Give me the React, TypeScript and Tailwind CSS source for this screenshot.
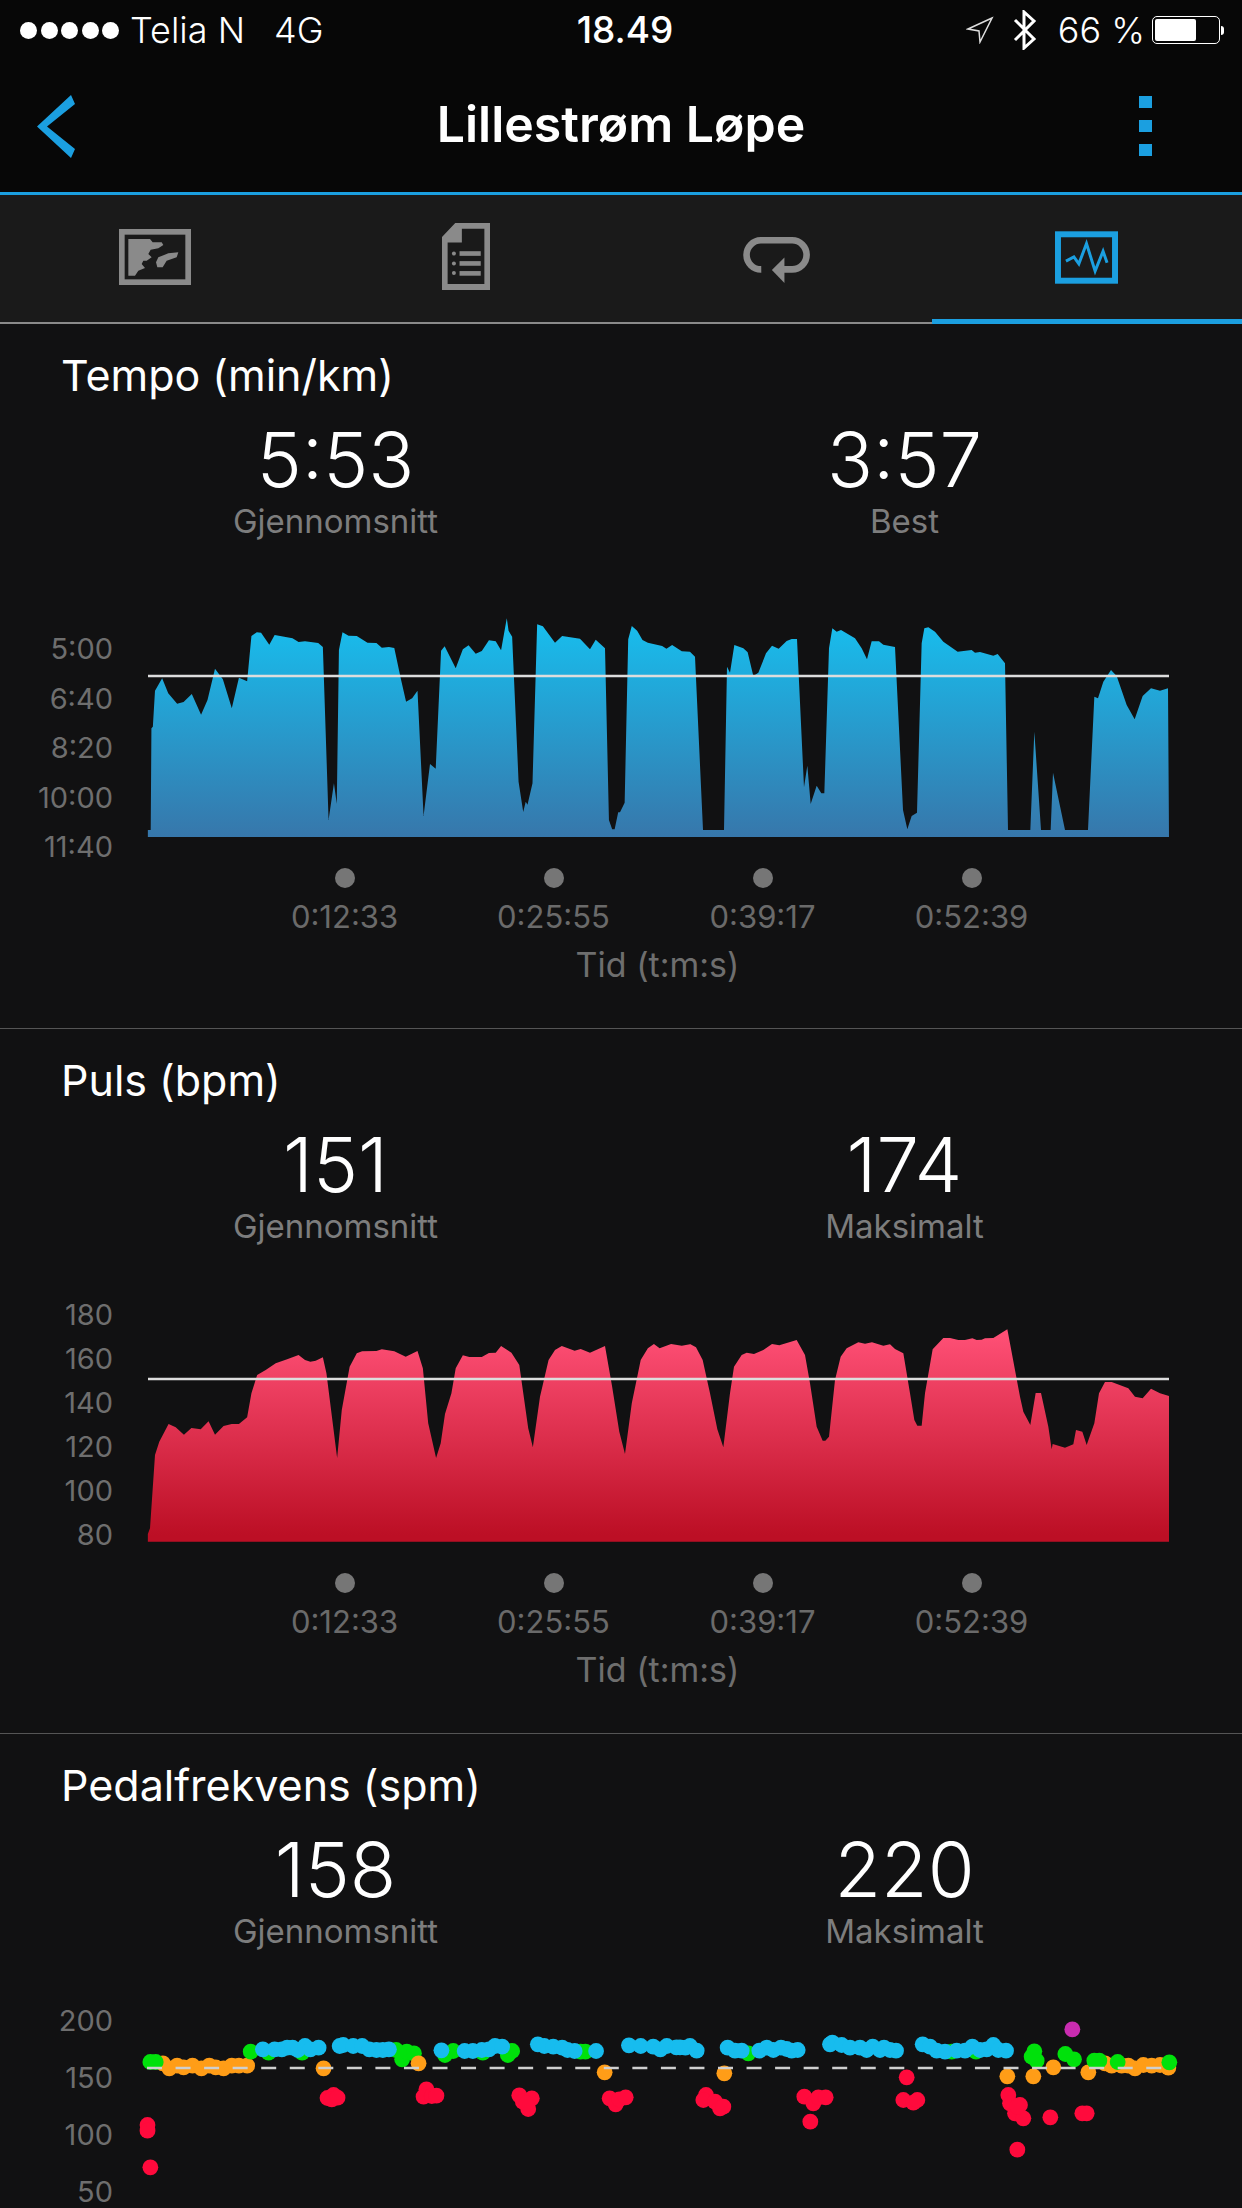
type Pt = [number, number];

const BLUE = '#1b9fe0';

// traced from the screenshot in crop units; left crops are 2.8x/3y, right crops 3x/3y
const mapL = (pts: Pt[], oy: number) => pts.map(([x, y]) => `${130 + x / 2.8},${oy + y / 3}`);
const mapR = (pts: Pt[], oy: number) => pts.map(([x, y]) => `${680 + x / 3},${oy + y / 3}`);

const tempoLeft: Pt[] = [[50,711],[50,690],[58,690],[60,385],[64,380],[70,272],[90,235],[107,280],[132,311],[150,306],[173,282],[199,344],[217,300],[238,206],[260,238],[285,325],[305,233],[328,244],[340,108],[355,97],[367,98],[390,134],[405,105],[455,115],[472,126],[490,124],[527,129],[540,141],[556,660],[571,550],[579,612],[585,150],[595,97],[612,107],[635,108],[665,128],[690,129],[705,143],[725,141],[740,144],[758,235],[773,305],[790,295],[805,272],[822,648],[840,492],[856,506],[871,152],[881,139],[912,205],[932,148],[948,136],[968,161],[985,153],[1005,121],[1024,124],[1039,151],[1055,55],[1060,92],[1070,110],[1088,545],[1101,636],[1108,605],[1113,614],[1127,550],[1140,73],[1156,79],[1190,128],[1210,108],[1260,116],[1288,148],[1304,119],[1330,145],[1341,660],[1350,688],[1357,688],[1367,637],[1372,637],[1385,608],[1395,118],[1405,78],[1420,92],[1435,120],[1450,128],[1490,138],[1502,146],[1518,135],[1545,154],[1568,155]];
const tempoRight: Pt[] = [[30,155],[45,170],[69,690],[132,690],[141,200],[150,218],[163,135],[190,145],[203,157],[220,228],[235,218],[258,160],[276,137],[296,146],[320,123],[335,117],[351,117],[372,562],[382,497],[392,612],[410,557],[424,580],[433,580],[447,145],[457,85],[470,95],[483,90],[525,115],[545,145],[561,178],[575,124],[597,124],[610,134],[645,141],[669,630],[682,688],[695,648],[711,638],[725,130],[733,85],[745,82],[765,95],[790,125],[833,155],[875,150],[885,158],[900,156],[940,167],[953,162],[975,190],[984,690],[1051,690],[1063,395],[1083,690],[1112,690],[1119,518],[1155,690],[1224,690],[1243,290],[1254,295],[1270,245],[1293,210],[1310,228],[1340,315],[1364,358],[1388,288],[1413,265],[1440,272],[1464,265],[1467,711]];
const pulseLeft: Pt[] = [[50,695],[50,672],[56,655],[70,435],[82,395],[108,342],[128,352],[151,374],[172,354],[198,358],[220,334],[238,374],[262,348],[285,342],[305,342],[328,322],[340,250],[356,195],[380,180],[408,160],[440,148],[472,135],[490,150],[505,155],[520,152],[540,142],[550,190],[580,444],[593,300],[615,170],[635,130],[650,124],[690,123],[705,118],[740,124],[772,140],[805,123],[820,175],[835,340],[857,444],[870,400],[882,312],[900,250],[912,175],[932,136],[950,141],[985,141],[1005,129],[1024,128],[1039,108],[1068,128],[1090,165],[1115,355],[1128,412],[1148,260],[1172,150],[1190,120],[1209,108],[1245,122],[1262,117],[1288,128],[1330,108],[1350,230],[1370,365],[1386,432],[1405,280],[1430,150],[1450,115],[1467,102],[1483,115],[1515,102],[1545,107],[1568,103]];
const pulseRight: Pt[] = [[30,102],[48,112],[68,150],[90,250],[112,358],[130,412],[150,250],[162,170],[185,135],[200,128],[222,132],[250,120],[276,102],[298,106],[350,90],[375,135],[390,220],[410,350],[428,392],[436,392],[447,380],[465,210],[482,140],[500,115],[535,97],[555,101],[576,97],[610,107],[630,103],[645,117],[670,130],[690,250],[703,330],[712,347],[725,347],[735,250],[758,118],[790,84],[810,84],[835,90],[855,90],[877,85],[890,90],[905,89],[915,85],[940,84],[982,58],[1020,260],[1030,305],[1051,345],[1067,249],[1083,249],[1105,350],[1115,418],[1118,402],[1155,413],[1180,403],[1188,360],[1207,365],[1220,405],[1243,340],[1257,250],[1275,216],[1295,216],[1345,235],[1365,260],[1388,265],[1413,236],[1440,250],[1467,258],[1467,695]];

const dotsLeft: Record<string, Pt[]> = {
  '#ff0a3c': [[49,375],[49,392],[57,502],[553,294],[570,285],[565,298],[581,293],[830,268],[822,290],[845,288],[858,287],[1090,286],[1125,295],[1100,305],[1115,327],[1110,310],[1343,295],[1360,313],[1370,298],[1388,292]],
  '#ff9d17': [[92,190],[110,205],[132,197],[150,202],[175,197],[200,205],[222,197],[240,202],[262,205],[285,197],[305,197],[328,197],[542,205],[1329,217]],
  '#00e10b': [[57,186],[72,186],[338,155],[388,158],[482,158],[745,150],[762,178],[775,155],[795,160],[882,165],[905,153],[988,158],[1058,165],[1070,153],[1275,155],[1262,155]],
  '#ff9e18': [[808,190]],
  '#17bcee': [[372,148],[405,148],[425,148],[440,143],[455,143],[470,150],[490,138],[505,148],[528,143],[587,138],[597,135],[625,138],[650,138],[670,148],[690,150],[708,150],[725,148],[872,151],[937,153],[960,153],[985,150],[1005,148],[1022,138],[1042,140],[1142,133],[1160,138],[1185,140],[1210,143],[1225,150],[1245,153],[1305,153],[1397,136],[1430,138],[1465,140],[1485,148],[1503,138],[1530,142],[1555,143]],
};
const dotsRight: Record<string, Pt[]> = {
  '#ff0a3c': [[78,285],[70,300],[105,305],[120,325],[130,320],[373,290],[400,310],[415,292],[437,292],[391,365],[680,232],[670,300],[700,308],[712,300],[985,285],[990,310],[1020,315],[1005,340],[1030,355],[1012,320],[1012,449],[1111,352],[1207,340],[1220,340]],
  '#ff9d17': [[133,220],[982,229],[1060,229],[1120,202],[1225,217],[1275,190],[1295,197],[1325,197],[1345,197],[1365,205],[1390,195],[1415,197],[1440,195],[1465,203]],
  '#00e10b': [[205,160],[815,155],[888,155],[1063,154],[1055,170],[1070,182],[1156,162],[1182,178],[1243,182],[1258,182],[1313,186],[1468,187]],
  '#17bcee': [[0,142],[30,138],[50,152],[143,143],[165,152],[185,152],[238,152],[260,143],[280,150],[303,143],[320,147],[335,152],[353,150],[450,133],[457,128],[485,135],[510,143],[540,143],[560,150],[578,140],[600,150],[612,143],[630,150],[648,152],[728,133],[750,140],[770,152],[795,155],[830,152],[855,152],[877,140],[900,150],[920,148],[940,135],[955,150],[978,152]],
  '#c92cb0': [[1177,88]],
};

const StatusBar = () => (
  <div className="flex items-center h-[60px] text-[36px] text-white">
    <div className="flex items-center flex-1 pl-[20px]">
      <div className="flex gap-[3.5px]">
        <span className="w-[17px] h-[17px] rounded-full bg-white" />
        <span className="w-[17px] h-[17px] rounded-full bg-white" />
        <span className="w-[17px] h-[17px] rounded-full bg-white" />
        <span className="w-[17px] h-[17px] rounded-full bg-white" />
        <span className="w-[17px] h-[17px] rounded-full bg-white" />
      </div>
      <span className="ml-[11px] font-light">Telia N</span>
      <span className="ml-[29px] font-light">4G</span>
    </div>
    <span className="font-medium text-[37px] ml-[10px]">18.49</span>
    <div className="flex items-center justify-end flex-1 pr-[22px]">
      <svg viewBox="0 0 28 28" className="w-[28px] h-[28px]">
        <polygon points="26,2 2,13 13,15 14,26" fill="none" stroke="#ddd" strokeWidth="1.5" />
      </svg>
      <svg viewBox="0 0 24 40" className="w-[24px] h-[40px] ml-[19px]">
        <polyline points="2,10 21,29 11,38 11,2 21,11 2,30" fill="none" stroke="#fff" strokeWidth="3" />
      </svg>
      <span className="ml-[21px] mr-[7px] font-light">66 %</span>
      <div className="relative w-[68px] h-[28px] rounded-[5px] border border-white p-[2px]">
        <div className="w-[41px] h-full bg-white rounded-[2px]" />
        <div className="absolute -right-[5px] top-[9px] w-[3px] h-[9px] rounded-r-full bg-white" />
      </div>
    </div>
  </div>
);

const NavBar = () => (
  <div className="flex items-center h-[135px] border-b-[3px] border-[#1b9fe0] px-[37px]">
    <div className="flex-1">
      <svg viewBox="0 0 38 63" className="w-[38px] h-[63px]">
        <polygon points="34,0 38,9 10,31.5 38,54 34,63 0,31.5" fill={BLUE} />
      </svg>
    </div>
    <span className="text-[50px] font-semibold text-white leading-none pb-[4px]">Lillestrøm Løpe</span>
    <div className="flex-1 flex justify-end">
      <div className="flex flex-col gap-[12px] mr-[53px]">
        <span className="w-[13px] h-[12px] bg-[#1b9fe0]" />
        <span className="w-[13px] h-[12px] bg-[#1b9fe0]" />
        <span className="w-[13px] h-[12px] bg-[#1b9fe0]" />
      </div>
    </div>
  </div>
);

const TabBar = () => (
  <div className="flex h-[129px] bg-[#1a1a1a]">
    <div className="flex-1 flex items-center justify-center border-b-2 border-[#8a8a8a] pb-[4px]">
      <svg viewBox="117 55 216 168" className="w-[72px] h-[56px]">
        <rect x="125.5" y="63.5" width="199" height="151" fill="none" stroke="#8a8a8a" strokeWidth="17" />
        <path d="M145 85H210L218 95H245L250 103L235 113L212 117L205 130L215 140L200 150L190 150L185 160L195 172L175 180L165 195H145Z" fill="#8a8a8a" />
        <path d="M235 140L265 128L295 125L290 140L260 150L248 170H232L228 155Z" fill="#8a8a8a" />
      </svg>
    </div>
    <div className="flex-1 flex items-center justify-center border-b-2 border-[#8a8a8a] pb-[4px]">
      <svg viewBox="1085 38 145 202" className="w-[48px] h-[67px]">
        <path fillRule="evenodd" d="M1125 38H1230V240H1085V80ZM1145 55V97H1102V222H1213V55Z" fill="#8a8a8a" />
        <circle cx="1121" cy="130" r="6" fill="#8a8a8a" />
        <circle cx="1121" cy="160" r="6" fill="#8a8a8a" />
        <circle cx="1121" cy="189" r="6" fill="#8a8a8a" />
        <rect x="1138" y="123" width="64" height="14" fill="#8a8a8a" />
        <rect x="1138" y="153" width="64" height="14" fill="#8a8a8a" />
        <rect x="1138" y="183" width="64" height="14" fill="#8a8a8a" />
      </svg>
    </div>
    <div className="flex-1 flex items-center justify-center border-b-2 border-[#8a8a8a] pt-[2px]">
      <svg viewBox="128 83 202 139" className="w-[67px] h-[46px]">
        <path d="M183 181A44 44 0 0 1 182 93H276A44 44 0 0 1 276 181H245" fill="none" stroke="#8a8a8a" strokeWidth="20" />
        <polygon points="253,145 215,183 253,222" fill="#8a8a8a" />
      </svg>
    </div>
    <div className="flex-1 flex items-center justify-center border-b-[5px] border-[#1b9fe0]">
      <svg viewBox="1065 60 190 158" className="w-[63px] h-[53px]">
        <rect x="1074" y="69" width="172" height="140" fill="none" stroke={BLUE} strokeWidth="18" />
        <polyline points="1098,150 1122,137 1137,158 1160,97 1186,180 1210,120 1222,155" fill="none" stroke={BLUE} strokeWidth="9" />
      </svg>
    </div>
  </div>
);

const Stat = ({ value, label }: { value: string; label: string }) => (
  <div className="w-[569px] flex flex-col items-center">
    <span className="text-[76px] leading-[83px] font-light text-white">{value}</span>
    <span className="text-[33px] leading-[40px] text-[#7d7d7d]">{label}</span>
  </div>
);

type SectionProps = {
  title: string;
  stats: [string, string, string, string];
  yLabels: string[];
  yColClass: string;
  viewBox: string;
  ticks?: boolean;
  children: React.ReactNode;
};

const Section = ({ title, stats, yLabels, yColClass, viewBox, ticks, children }: SectionProps) => (
  <section className="h-[705px] border-b border-[#555555]">
    <h2 className="pt-[27px] pl-[61px] text-[43px] leading-[48px] text-white">{title}</h2>
    <div className="flex ml-[51px] mt-[19px]">
      <Stat value={stats[0]} label={stats[1]} />
      <Stat value={stats[2]} label={stats[3]} />
    </div>
    <div className="flex h-[280px] mt-[33px]">
      <div className={`w-[113px] flex flex-col items-end text-[29px] text-[#6e6e6e] ${yColClass}`}>
        {yLabels.map((l) => (
          <span key={l} className="shrink-0 h-[34px] leading-[34px]">{l}</span>
        ))}
      </div>
      <svg viewBox={viewBox} className="w-[1050px] h-[280px] ml-[17px]">
        {children}
      </svg>
    </div>
    {ticks && (
      <div className="mt-[14px]">
        <div className="flex pl-[240px] text-[31px] text-[#6a6a6a]">
          {['0:12:33', '0:25:55', '0:39:17', '0:52:39'].map((t) => (
            <div key={t} className="w-[209px] flex flex-col items-center">
              <span className="w-[20px] h-[20px] rounded-full bg-[#767676]" />
              <span className="mt-[9px] leading-[40px]">{t}</span>
            </div>
          ))}
        </div>
        <div className="pl-[146px] w-[1169px] text-center text-[34px] leading-[44px] text-[#6e6e6e] mt-[6px]">Tid (t:m:s)</div>
      </div>
    )}
  </section>
);

const Dots = ({ data, map }: { data: Record<string, Pt[]>; map: (p: Pt[], oy: number) => string[] }) => (
  <>
    {Object.entries(data).map(([color, pts]) =>
      map(pts, 2000).map((p, i) => {
        const [cx, cy] = p.split(',');
        return <circle key={color + i} cx={cx} cy={cy} r="7.9" fill={color} />;
      })
    )}
  </>
);

export default function App() {
  return (
    <div className="w-[1242px] h-[2208px] overflow-hidden bg-[#111112] [font-family:Inter,sans-serif]">
      <div className="bg-[#070707]">
        <StatusBar />
        <NavBar />
      </div>
      <TabBar />

      <Section
        title="Tempo (min/km)"
        stats={['5:53', 'Gjennomsnitt', '3:57', 'Best']}
        yLabels={['5:00', '6:40', '8:20', '10:00', '11:40']}
        yColClass="pt-[58px] gap-[15.5px]"
        viewBox="130 574 1050 280"
        ticks
      >
        <defs>
          <linearGradient id="tempoFill" gradientUnits="userSpaceOnUse" x1="0" y1="618" x2="0" y2="837">
            <stop offset="0" stopColor="#17bfef" />
            <stop offset="1" stopColor="#3777ab" />
          </linearGradient>
        </defs>
        <polygon points={[...mapL(tempoLeft, 600), ...mapR(tempoRight, 600)].join(' ')} fill="url(#tempoFill)" />
        <line x1="148" y1="676" x2="1169" y2="676" stroke="#dddddd" strokeWidth="2.5" />
      </Section>

      <Section
        title="Puls (bpm)"
        stats={['151', 'Gjennomsnitt', '174', 'Maksimalt']}
        yLabels={['180', '160', '140', '120', '100', '80']}
        yColClass="pt-[18.5px] gap-[10.2px]"
        viewBox="130 1279 1050 280"
        ticks
      >
        <defs>
          <linearGradient id="pulseFill" gradientUnits="userSpaceOnUse" x1="0" y1="1335" x2="0" y2="1535">
            <stop offset="0" stopColor="#fe4f75" />
            <stop offset="1" stopColor="#bc0f25" />
          </linearGradient>
        </defs>
        <polygon points={[...mapL(pulseLeft, 1310), ...mapR(pulseRight, 1310)].join(' ')} fill="url(#pulseFill)" />
        <line x1="148" y1="1379" x2="1169" y2="1379" stroke="#dddddd" strokeWidth="2.5" />
      </Section>

      <Section
        title="Pedalfrekvens (spm)"
        stats={['158', 'Gjennomsnitt', '220', 'Maksimalt']}
        yLabels={['200', '150', '100', '50']}
        yColClass="pt-[19.5px] gap-[23px]"
        viewBox="130 1984 1050 280"
      >
        <Dots data={dotsLeft} map={mapL} />
        <Dots data={dotsRight} map={mapR} />
        <line x1="147" y1="2068" x2="1169" y2="2068" stroke="#cfcfcf" strokeWidth="2.5" strokeDasharray="15 13.55" />
      </Section>
    </div>
  );
}
